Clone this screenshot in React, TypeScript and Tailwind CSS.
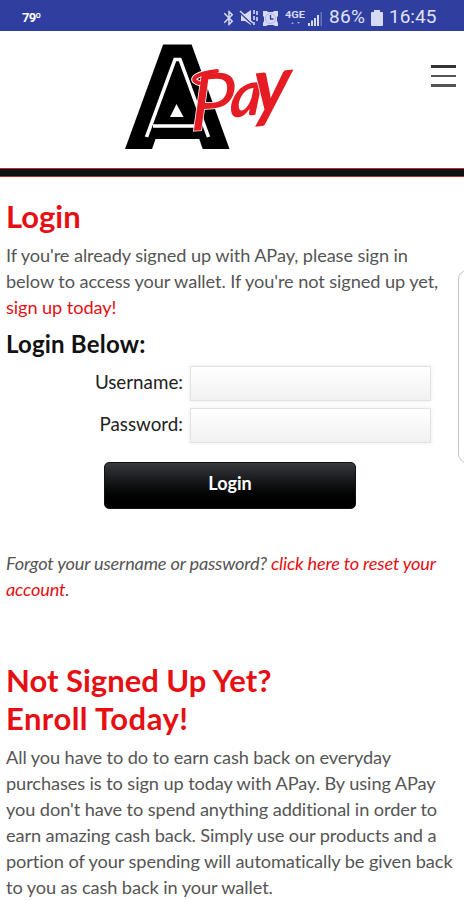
import { useState } from 'react';
import { MdBluetooth } from 'react-icons/md';

// Status bar glyphs
function StatusIcons() {
  return (
    <svg width="108" height="22" viewBox="0 0 108 22" className="block" fill="#d6daf6">
      {/* vibrate / muted speaker */}
      <path d="M19 7h4l6-4v15l-6-4h-4z" />
      <path d="M17 5l13 12" stroke="#303f9f" strokeWidth="1.5" />
      <path d="M18 4l13 12" stroke="#d6daf6" strokeWidth="1.5" />
      <path d="M32 3v4M35 4v4M32 9v4M35 10v4M32 15v3" fill="none" stroke="#d6daf6" strokeWidth="1.6" />
      {/* alarm */}
      <path d="M41 4h4l1 1h5l1-1h4v5l-1 1v4l1 2v3h-3l-2-1h-5l-2 1h-3v-3l1-2v-4l-1-1z" />
      <circle cx="48.500" cy="11.500" r="5" fill="none" stroke="#a3abdc" strokeWidth="0.8" />
      <path d="M48.500 8v4h3" fill="none" stroke="#303f9f" strokeWidth="1.300" />
      {/* data arrows and signal */}
      <path d="M69 17l1.500-2 1.500 2zM75 15h3l-1.500 2z" opacity=".6" />
      <path d="M86 16h2v3h-2zM89 13.500h2v5.500h-2zM92 11h2v8h-2zM95 8h2v11h-2z" />
      <path d="M98.500 5h1.500v14h-1.500z" opacity=".35" />
      <text x="63" y="11" fontFamily="Roboto, sans-serif" fontWeight="700" fontSize="9.500" textLength="20" lengthAdjust="spacingAndGlyphs">4GE</text>
    </svg>
  );
}

function StatusBar() {
  return (
    <div className="flex h-[31px] items-center bg-[#303f9f] pt-[4px] pl-[22px] font-[Roboto,sans-serif] text-[#dfe2fa]">
      <span className="w-[200px] text-[13px] font-bold tracking-[-0.8px] text-white">79º</span>
      <div className="relative h-[22px] w-[108px] shrink-0">
        <MdBluetooth className="absolute top-0.5 -left-0.5 size-[18px] text-[#d6daf6]" />
        <StatusIcons />
      </div>
      <span className="w-[41px] -translate-x-px text-[19px] tracking-[0.3px]">86%</span>
      <svg width="12" height="16" viewBox="0 0 12 16" className="mr-[6px]" fill="#d6daf6">
        <path d="M3 0h6v2h2a1 1 0 0 1 1 1v12a1 1 0 0 1-1 1H1a1 1 0 0 1-1-1V3a1 1 0 0 1 1-1h2z" />
      </svg>
      <span className="text-[19px]">16:45</span>
    </div>
  );
}

function Logo() {
  return (
    <svg width="190" height="170" viewBox="116 10 190 170" role="img" aria-label="APay" className="-mt-[28px] shrink-0">
      <text x="177.500" y="146" textAnchor="middle" fontFamily="'Liberation Sans', Arial, sans-serif" fontWeight="700" fontSize="143" stroke="#000" strokeWidth="6">A</text>
      {/* solid core with the inline stripe and small counter */}
      <path d="M177 58L150 139H205z" />
      <path d="M146.500 137L175 59.500H180L208.500 137M153 126H202" fill="none" stroke="#fff" strokeWidth="3.600" />
      <path d="M176.500 104L170 117H183.500z" fill="#fff" />
      {/* brush flick in front of the name */}
      <path d="M199 83C187 79 199 73 217 71" fill="none" stroke="#fff" strokeWidth="6" strokeLinecap="round" />
      <g fontFamily="Lato, sans-serif" fontStyle="italic" fill="#e51c23" stroke="#fff" strokeWidth="1.500" paintOrder="stroke">
        <text fontSize="79" fontWeight="400" transform="translate(190 131) rotate(-3) skewX(-4)">P</text>
        <text fontSize="62" fontWeight="700" transform="translate(229 118) rotate(-7) skewX(-12)">a</text>
        <text fontSize="78" fontWeight="700" transform="translate(252 114) rotate(-6) skewX(-8)">y</text>
      </g>
      <path d="M199 83C187 79 199 73 217 71" fill="none" stroke="#e51c23" strokeWidth="4" strokeLinecap="round" />
    </svg>
  );
}

interface FieldProps {
  label: string;
  type: string;
  value: string;
  onChange: (value: string) => void;
}

function Field({ label, type, value, onChange }: FieldProps) {
  return (
    <label className="flex h-[35px] items-center">
      <span className="w-[183px] pb-1 text-right text-[18.800px] text-[#222]">{label}</span>
      <input
        type={type}
        value={value}
        onChange={e => onChange(e.target.value)}
        className="ml-[7px] h-[35px] w-[241px] border border-[#e2e2e2] bg-linear-to-b from-white to-[#f1f1f1] px-2 shadow-[0_0_5px_rgba(0,0,0,0.08)] outline-none"
      />
    </label>
  );
}

export default function App() {
  const [username, setUsername] = useState('');
  const [password, setPassword] = useState('');

  return (
    <div className="relative h-[900px] w-[464px] overflow-hidden bg-white font-[Lato,sans-serif]">
      <StatusBar />

      {/* Header */}
      <header className="flex h-[137px] items-start pt-[7px] pl-[116px]">
        <Logo />
        <button aria-label="Menu" className="mt-[27px] ml-[125px] flex w-[25px] shrink-0 flex-col gap-[7px]">
          <span className="h-[2.500px] bg-[#333]" />
          <span className="h-[2.500px] bg-[#555]" />
          <span className="h-[2.500px] bg-[#555]" />
        </button>
      </header>
      <div className="h-[9px] border-y border-[#c9252b] bg-[#0b1113]" />

      {/* Login */}
      <main className="text-[18.200px] leading-[26px] font-normal tracking-[-0.09px] text-[#555] [font-variant-ligatures:none]">
        <h1 className="mt-[20px] ml-1.5 text-[31px] leading-[38px] font-bold tracking-normal text-[#e60f14]">Login</h1>
        <p className="mt-[7px] ml-1.5 whitespace-nowrap">
          If you're already signed up with APay, please sign in<br />
          below to access your wallet. If you're not signed up yet,<br />
          <a href="#" className="text-[#e60f14]">sign up today!</a>
        </p>
        <h2 className="mt-[9px] ml-1.5 text-[24px] leading-[30px] font-bold tracking-[0.2px] text-[#111]">Login Below:</h2>
        <form className="mt-[7px] tracking-normal" onSubmit={e => e.preventDefault()}>
          <Field label="Username:" type="text" value={username} onChange={setUsername} />
          <div className="h-[7px]" />
          <Field label="Password:" type="password" value={password} onChange={setPassword} />
          <button className="mt-[19px] ml-[104px] block h-[47px] w-[252px] rounded-[5px] border border-[#111] bg-linear-to-b from-[#373a3e] to-black pb-1.5 text-[18px] font-bold text-white">
            Login
          </button>
        </form>
        <p className="mt-[41px] ml-1.5 tracking-[-0.18px] whitespace-nowrap italic">
          Forgot your username or password? <a href="#" className="text-[#e60f14]">click here to reset your<br />account</a>.
        </p>

        {/* Enroll */}
        <h1 className="mt-[59px] ml-1.5 text-[31px] leading-[38px] font-bold tracking-normal text-[#e60f14]">
          Not Signed Up Yet?<br />
          <span className="tracking-[0.45px]">Enroll Today!</span>
        </h1>
        <p className="mt-[7px] ml-1.5 whitespace-nowrap">
          All you have to do to earn cash back on everyday<br />
          purchases is to sign up today with APay. By using APay<br />
          you don't have to spend anything additional in order to<br />
          earn amazing cash back. Simply use our products and a<br />
          portion of your spending will automatically be given back<br />
          to you as cash back in your wallet.
        </p>
      </main>

      {/* Edge panel handle */}
      <div className="absolute top-[270px] left-[458px] h-[193px] w-5 rounded-[9px] border border-[#c4c4c4] bg-white" />
    </div>
  );
}
